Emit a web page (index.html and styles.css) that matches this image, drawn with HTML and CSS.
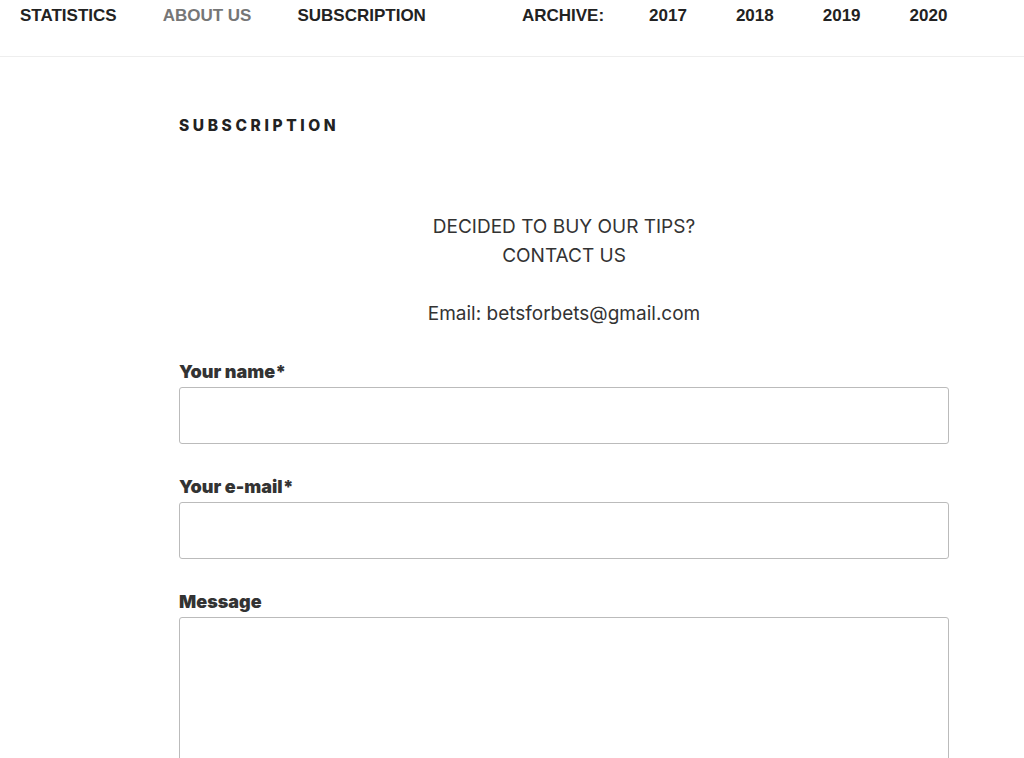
FILE: index.html
```html
<!DOCTYPE html>
<html lang="en">
<head>
  <meta charset="UTF-8">
  <title>Subscription</title>
  <link rel="stylesheet" href="styles.css">
</head>
<body>
  <header class="site-header">
    <nav class="top-nav">
      <ul class="menu">
        <li><a href="#">Statistics</a></li>
        <li class="current"><a href="#">About us</a></li>
        <li><a href="#">Subscription</a></li>
      </ul>
      <ul class="menu archive">
        <li class="label"><a href="#">Archive:</a></li>
        <li><a href="#">2017</a></li>
        <li><a href="#">2018</a></li>
        <li><a href="#">2019</a></li>
        <li><a href="#">2020</a></li>
      </ul>
    </nav>
  </header>

  <main class="page">
    <h1 class="entry-title">Subscription</h1>

    <div class="entry-content">
      <p class="intro">DECIDED TO BUY OUR TIPS?<br>CONTACT US</p>
      <p class="intro">Email: betsforbets@gmail.com</p>

      <form class="contact-form">
        <div class="field">
          <label for="yourName">Your name*</label>
          <input type="text" id="yourName">
        </div>
        <div class="field">
          <label for="yourEmail">Your e-mail*</label>
          <input type="email" id="yourEmail">
        </div>
        <div class="field">
          <label for="yourMessage">Message</label>
          <textarea id="yourMessage"></textarea>
        </div>
      </form>
    </div>
  </main>
</body>
</html>
```

FILE: styles.css
```css
/* Base */
* { box-sizing: border-box; }
body { margin: 0; background: #fff; color: #333; font-family: Inter, "Liberation Sans", sans-serif; }
a { color: inherit; text-decoration: none; }

/* Top navigation */
.site-header { height: 57px; border-bottom: 1px solid #eee; }
.top-nav { display: flex; padding: 6px 0 0 20px; }
.menu { display: flex; gap: 46px; list-style: none; margin: 0; padding: 0; }
.menu li { font-family: "Liberation Sans", Arial, sans-serif; font-weight: 700; font-size: 17px; line-height: 20px; text-transform: uppercase; color: #222; }
.menu li.current { color: #767676; }
.menu.archive { margin-left: 96px; gap: 49px; }
.menu.archive .label { margin-right: -4px; }

/* Page */
.page { width: 770px; margin-left: 179px; padding-top: 59px; }
.entry-title { margin: 0; font-size: 15.5px; font-weight: 800; line-height: 20px; letter-spacing: 3.6px; text-transform: uppercase; color: #222; }

.entry-content { padding-top: 76px; }
.intro { margin: 0 0 29px; text-align: center; font-size: 19px; line-height: 29px; font-weight: 400; color: #333; }
.intro:last-of-type { margin-bottom: 32px; }

/* Form */
.field { margin-bottom: 31px; }
.field label { display: block; font-size: 18px; font-weight: 900; line-height: 24px; margin-bottom: 3px; color: #333; }
.field input, .field textarea { display: block; width: 100%; height: 57px; border: 1px solid #bbb; border-radius: 3px; background: #fff; font: inherit; padding: 0.7em; }
.field textarea { height: 200px; resize: none; }
```
